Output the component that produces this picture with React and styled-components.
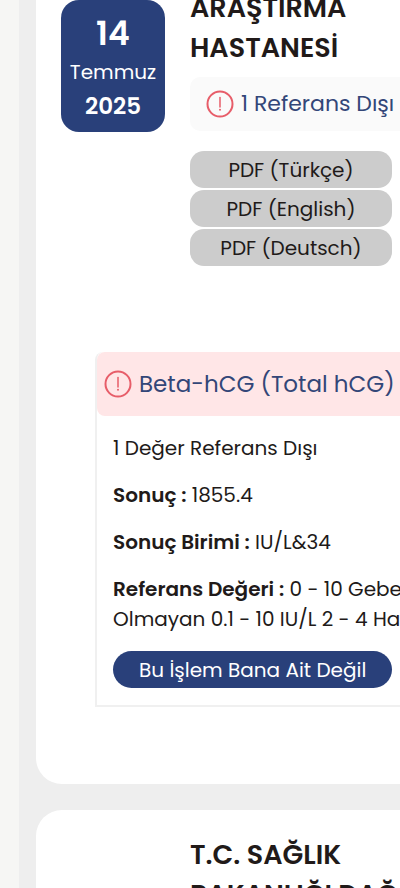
import React from 'react';

import styled, { createGlobalStyle } from 'styled-components'

const GlobalStyle = createGlobalStyle`
  * {
    box-sizing: border-box;
  }
  body {
    margin: 0;
    background: #f6f6f4;
    color: #211a19;
    font-family: Poppins, Inter, sans-serif;
    font-size: 20px;
    line-height: 30px;
  }
`

const Page = styled.main`
  height: 100vh;
  padding-left: 19px;
  overflow: hidden;
`

const List = styled.div`
  display: flex;
  flex-direction: column;
  gap: 26px;
  margin-top: -37px;
  padding-left: 17px;
  background: #eeeeee;
`

const Card = styled.article`
  padding: 25px 0 77px 25px;
  border-radius: 26px 0 0 26px;
  background: #fff;
`

const Head = styled.header`
  display: grid;
  grid-template-columns: 104px minmax(0, 1fr);
  column-gap: 25px;
  align-items: start;
`

const DateBadge = styled.time`
  display: flex;
  flex-direction: column;
  align-items: center;
  margin-top: 12px;
  padding: 14px 0 10px;
  border-radius: 18px;
  background: #29407a;
  color: #fff;
  font-size: 20px;
  line-height: 34px;
`

const Day = styled.strong`
  font-size: 33px;
  font-weight: 600;
  line-height: 40px;
`

const Month = styled.span`
  line-height: 36px;
`

const Year = styled.strong`
  font-size: 23px;
  font-weight: 600;
  line-height: 32px;
`

const Info = styled.div`
  grid-column: 2;
`

const Title = styled.h2`
  margin: 0;
  font-size: 27px;
  font-weight: 600;
  line-height: 40px;
  white-space: nowrap;
`

const Notice = styled.p`
  display: flex;
  align-items: center;
  gap: 7px;
  height: 54px;
  margin: 9px 0 20px;
  padding-left: 16px;
  border-radius: 10px 0 0 10px;
  background: #fafafa;
  color: #334678;
  font-size: 22px;
  white-space: nowrap;
`

const Downloads = styled.div`
  display: flex;
  flex-direction: column;
  gap: 2px;
  margin-right: 8px;
`

const Button = styled.button`
  height: 37px;
  padding: 0 26px;
  border: 0;
  border-radius: ${props => props.$primary ? '19px' : '14px'};
  background: ${props => props.$primary ? '#29407a' : '#cccccc'};
  color: ${props => props.$primary ? '#fff' : '#211a19'};
  font: inherit;
  white-space: nowrap;
  cursor: pointer;
`

const Result = styled.section`
  margin: 86px 0 0 34px;
  border: 2px solid #f0f0f0;
  border-width: 0 0 2px 2px;
  border-radius: 8px 0 0 0;
`

const ResultTitle = styled.h3`
  display: flex;
  align-items: center;
  gap: 7px;
  height: 64px;
  margin: 0;
  padding-left: 7px;
  border-radius: 8px 0 0 8px;
  background: #ffe6e7;
  color: #334678;
  font-size: 23px;
  font-weight: 400;
  white-space: nowrap;
`

const ResultBody = styled.div`
  padding: 17px 7px 17px 16px;
`

const Value = styled.p`
  margin: 0 0 17px;
  white-space: nowrap;

  strong {
    font-weight: 600;
  }
`

const Icon = styled.svg`
  flex: none;
  width: 28px;
  height: 28px;
`

const Alert = () => (
  <Icon viewBox="0 0 28 28" fill="none" stroke="#e75d69" aria-hidden="true">
    <circle cx="14" cy="14" r="12.5" strokeWidth="2" />
    <path d="M14 7.6v9.4" strokeWidth="1.5" strokeLinecap="round" />
    <circle cx="14" cy="19.8" r="1" fill="#e75d69" stroke="none" />
  </Icon>
)

export default class App extends React.Component {
  render () {
    return (
      <Page>
        <GlobalStyle />
        <List>
          <Card>
            <Head>
              <DateBadge dateTime="2025-07-14">
                <Day>14</Day>
                <Month>Temmuz</Month>
                <Year>2025</Year>
              </DateBadge>
              <Info>
                <Title>ARAŞTIRMA<br />HASTANESİ</Title>
                <Notice><Alert />1 Referans Dışı</Notice>
                <Downloads>
                  <Button type="button">PDF (Türkçe)</Button>
                  <Button type="button">PDF (English)</Button>
                  <Button type="button">PDF (Deutsch)</Button>
                </Downloads>
              </Info>
            </Head>
            <Result>
              <ResultTitle><Alert />Beta-hCG (Total hCG)</ResultTitle>
              <ResultBody>
                <Value>1 Değer Referans Dışı</Value>
                <Value><strong>Sonuç :</strong> 1855.4</Value>
                <Value><strong>Sonuç Birimi :</strong> IU/L&amp;34</Value>
                <Value>
                  <strong>Referans Değeri :</strong> 0 - 10 Gebe<br />
                  Olmayan 0.1 - 10 IU/L 2 - 4 Ha
                </Value>
                <Button type="button" $primary>Bu İşlem Bana Ait Değil</Button>
              </ResultBody>
            </Result>
          </Card>
          <Card>
            <Head>
              <Info>
                <Title>T.C. SAĞLIK<br />BAKANLIĞI DAĞ</Title>
              </Info>
            </Head>
          </Card>
        </List>
      </Page>
    );
  }
}
